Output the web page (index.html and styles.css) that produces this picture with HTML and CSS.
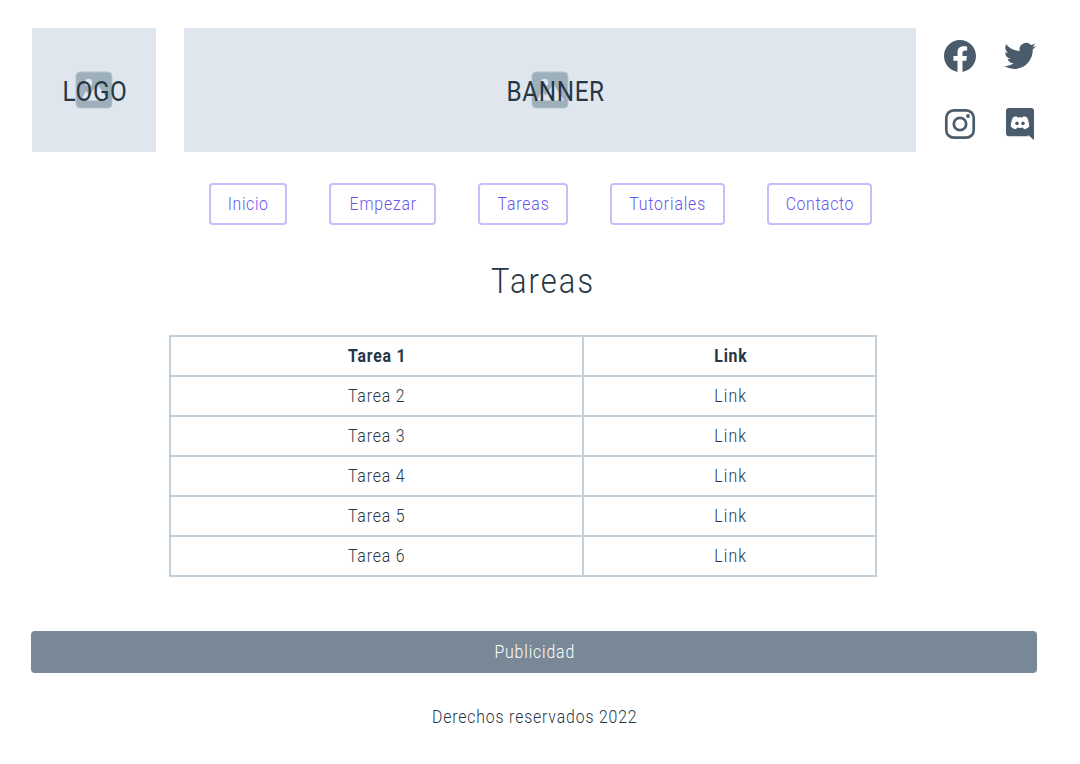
FILE: index.html
```html
<!DOCTYPE html>
<html lang="es">
<head>
<meta charset="utf-8">
<title>Tareas</title>
<link rel="stylesheet" href="styles.css">
</head>
<body>
<svg class="defs" width="0" height="0" aria-hidden="true">
  <symbol id="picture" viewBox="0 0 38 38">
    <rect x="1" y="1" width="36" height="36" rx="4" fill="#9eafbc" stroke="#b7c5cf"/>
    <circle cx="13.5" cy="11.5" r="3.8" fill="#dfe6ee"/>
    <path d="M6 29.500 11 20l3.500 4.500L22.500 13 33 29.500z" fill="#dfe6ee"/>
  </symbol>
</svg>
<header class="header">
  <div class="placeholder"><svg class="picture"><use href="#picture"/></svg><span class="label logo">LOGO</span></div>
  <div class="placeholder"><svg class="picture"><use href="#picture"/></svg><span class="label banner">BANNER</span></div>
  <div class="social">
    <svg viewBox="0 0 24 24"><path d="M24 12.073C24 5.446 18.627.073 12 .073S0 5.446 0 12.073c0 5.990 4.388 10.954 10.125 11.854v-8.385H7.078v-3.470h3.047V9.430c0-3.007 1.792-4.669 4.533-4.669 1.312 0 2.686.235 2.686.235v2.953H15.830c-1.491 0-1.956.925-1.956 1.874v2.250h3.328l-.532 3.470h-2.796v8.385C19.612 23.027 24 18.062 24 12.073z"/></svg>
    <svg viewBox="0 0 24 24"><path d="M23.953 4.570a10 10 0 0 1-2.825.775 4.958 4.958 0 0 0 2.163-2.723 9.990 9.990 0 0 1-3.127 1.184 4.920 4.920 0 0 0-8.384 4.482C7.690 8.095 4.067 6.130 1.640 3.162a4.822 4.822 0 0 0-.666 2.475c0 1.710.870 3.213 2.188 4.096a4.904 4.904 0 0 1-2.228-.616v.06a4.923 4.923 0 0 0 3.946 4.827 4.996 4.996 0 0 1-2.212.085 4.936 4.936 0 0 0 4.604 3.417 9.867 9.867 0 0 1-6.102 2.105c-.39 0-.779-.023-1.170-.067a13.995 13.995 0 0 0 7.557 2.209c9.053 0 13.998-7.496 13.998-13.985 0-.21 0-.42-.015-.63a9.935 9.935 0 0 0 2.460-2.548z"/></svg>
    <svg viewBox="0 0 32 32"><rect x="2.300" y="2.300" width="27.400" height="27.400" rx="7.500" fill="none" stroke="currentColor" stroke-width="2.700"/><circle cx="16" cy="16" r="6.200" fill="none" stroke="currentColor" stroke-width="2.700"/><circle cx="24" cy="8" r="1.900"/></svg>
    <svg viewBox="0 0 32 32"><path fill-rule="evenodd" d="M5 0h22a3 3 0 0 1 3 3v29l-6.500-5.500.8 1.700H5a3 3 0 0 1-3-3V3a3 3 0 0 1 3-3zM12.500 8.200c-2 .2-3.600 1.200-3.600 1.200C7.600 12 6.900 15 6.800 18.600c1.600 1.900 3.500 2.500 5.200 2.600l1.100-1.600c1.900.4 3.900.4 5.800 0l1.100 1.600c1.700-.1 3.600-.7 5.200-2.600-.1-3.600-.8-6.600-2.100-9.200 0 0-1.600-1-3.600-1.200l-.7 1.200c-1.900-.3-3.700-.3-5.600 0z"/><ellipse cx="13" cy="15.300" rx="1.700" ry="1.900"/><ellipse cx="19" cy="15.300" rx="1.700" ry="1.900"/></svg>
  </div>
</header>
<nav class="nav">
  <a class="inicio"><span class="text">Inicio</span></a>
  <a class="empezar"><span class="text">Empezar</span></a>
  <a class="tareas"><span class="text">Tareas</span></a>
  <a class="tutoriales"><span class="text">Tutoriales</span></a>
  <a class="contacto"><span class="text">Contacto</span></a>
</nav>
<h1 class="title"><span class="text">Tareas</span></h1>
<table class="tasks">
  <tr><th><span class="text">Tarea 1</span></th><th><span class="text">Link</span></th></tr>
  <tr><td><span class="text">Tarea 2</span></td><td><span class="text">Link</span></td></tr>
  <tr><td><span class="text">Tarea 3</span></td><td><span class="text">Link</span></td></tr>
  <tr><td><span class="text">Tarea 4</span></td><td><span class="text">Link</span></td></tr>
  <tr><td><span class="text">Tarea 5</span></td><td><span class="text">Link</span></td></tr>
  <tr><td><span class="text">Tarea 6</span></td><td><span class="text">Link</span></td></tr>
</table>
<div class="ad"><span class="text">Publicidad</span></div>
<footer class="footer"><span class="text">Derechos reservados 2022</span></footer>
</body>
</html>
```
FILE: styles.css
```css
* { box-sizing: border-box; }
body {
  margin: 0;
  height: 764px;
  padding: 28px 32px 0;
  overflow: hidden;
  background: #fff;
  color: #263645;
  font: 300 18px/24px Roboto, "Liberation Sans", sans-serif;
}
.defs { display: block; }
.header {
  display: grid;
  grid-template-columns: 124px 732px 92px;
  gap: 28px;
  height: 124px;
}
.placeholder {
  display: grid;
  place-items: center;
  background: #dfe6ee;
}
.placeholder > * { grid-area: 1 / 1; }
.picture { width: 38px; height: 38px; margin: 0 1px 1px 0; }
.label {
  font-size: 27px;
  font-weight: 400;
  line-height: 32px;
  letter-spacing: .7px;
  transform: scaleX(.9);
  margin-top: 3px;
}
.logo { margin-left: 2px; }
.banner { margin-left: 12px; }
.social {
  display: grid;
  grid-template-columns: 32px 32px;
  grid-template-rows: 32px 32px;
  gap: 36px 28px;
  padding-top: 12px;
}
.social svg { width: 32px; height: 32px; fill: currentColor; color: #4a5c6b; }
.text { display: inline-block; transform: scaleX(.88); letter-spacing: .95px; white-space: nowrap; }
.nav {
  display: flex;
  gap: 42px;
  margin: 31px 0 0 177px;
}
.nav a {
  display: flex;
  align-items: center;
  justify-content: center;
  height: 42px;
  padding-left: 1px;
  border: 2px solid #c7bffc;
  border-radius: 4px;
  color: #6554f0;
}
.inicio { width: 78px; }
.inicio .text, .contacto .text { letter-spacing: .7px; }
.empezar { width: 107px; }
.tareas { width: 90px; }
.tutoriales { width: 115px; }
.contacto { width: 105px; }
.title {
  margin: 35px 0 0;
  padding-left: 6px;
  text-align: center;
  font-size: 35px;
  font-weight: 300;
  line-height: 44px;
}
.title .text { letter-spacing: 2.400px; }
.tasks {
  width: 708px;
  margin: 31px 0 0 137px;
  table-layout: fixed;
  border-collapse: collapse;
}
.tasks th, .tasks td {
  height: 40px;
  padding: 0;
  border: 2px solid #c3cfd9;
  text-align: center;
}
.tasks td:last-child, .tasks th { padding-left: 2px; }
.tasks th:first-child { width: 413px; }
.tasks th { font-weight: 700; }
.tasks th .text { letter-spacing: .9px; }
.tasks td:last-child .text { letter-spacing: 1.300px; }
.ad {
  display: flex;
  align-items: center;
  justify-content: center;
  width: 1006px;
  height: 42px;
  margin: 54px 0 0 -1px;
  padding-left: 2px;
  border-radius: 4px;
  background: #788896;
  color: #fff;
}
.footer {
  width: 1006px;
  margin: 32px 0 0 -1px;
  padding-left: 2px;
  text-align: center;
}
```
